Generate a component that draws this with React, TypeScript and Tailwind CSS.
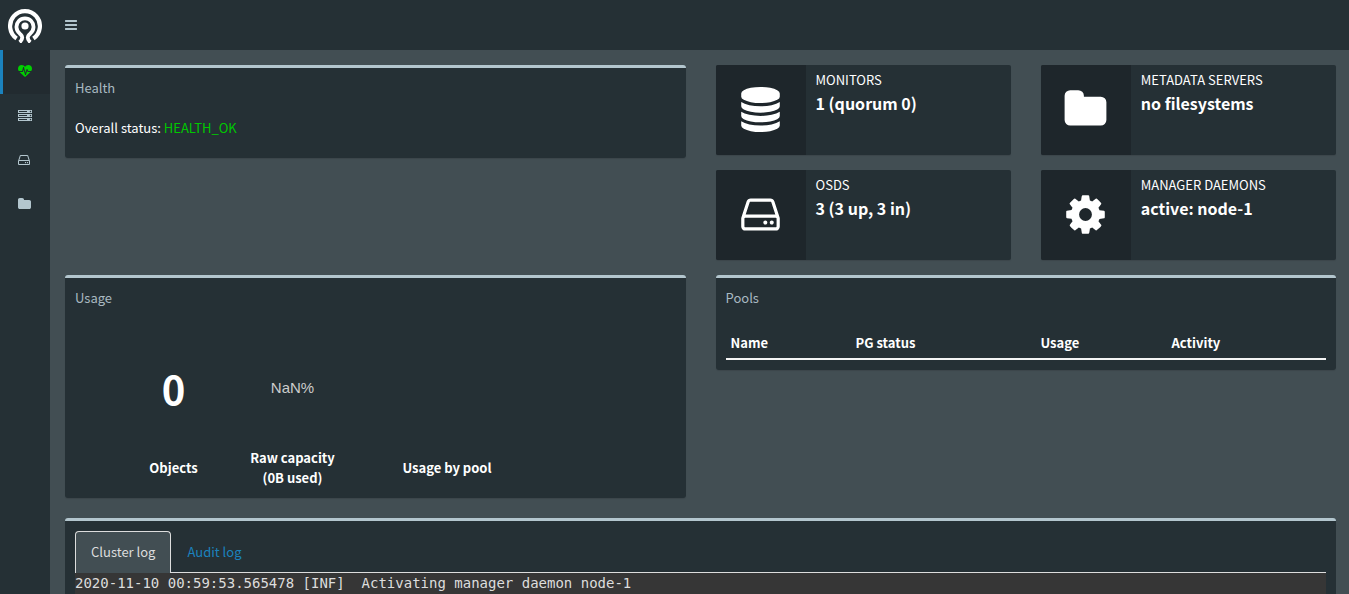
import type { ReactNode } from 'react';

type IconProps = { viewBox: string; path: string; className: string };

const Icon = ({ viewBox, path, className }: IconProps) => (
  <svg viewBox={viewBox} className={className} fill="currentColor" aria-hidden="true">
    <path d={path} />
  </svg>
);

const paths = {
  database:
    'M896 768q237 0 443-43t325-127v170q0 69-103 128t-280 93.5-385 34.5-385-34.5-280-93.5-103-128v-170q119 84 325 127t443 43zm0 768q237 0 443-43t325-127v170q0 69-103 128t-280 93.5-385 34.5-385-34.5-280-93.5-103-128v-170q119 84 325 127t443 43zm0-384q237 0 443-43t325-127v170q0 69-103 128t-280 93.5-385 34.5-385-34.5-280-93.5-103-128v-170q119 84 325 127t443 43zm0-1152q208 0 385 34.5t280 93.5 103 128v128q0 69-103 128t-280 93.5-385 34.5-385-34.5-280-93.5-103-128v-128q0-69 103-128t280-93.5 385-34.5z',
  folder:
    'M1728 608v704q0 92-66 158t-158 66h-1216q-92 0-158-66t-66-158v-960q0-92 66-158t158-66h320q92 0 158 66t66 158v32h672q92 0 158 66t66 158z',
  hdd: 'M1168 1216q0 33-23.5 56.5t-56.5 23.5-56.5-23.5-23.5-56.5 23.5-56.5 56.5-23.5 56.5 23.5 23.5 56.5zm256 0q0 33-23.5 56.5t-56.5 23.5-56.5-23.5-23.5-56.5 23.5-56.5 56.5-23.5 56.5 23.5 23.5 56.5zm112 160v-320q0-13-9.5-22.5t-22.5-9.5h-1216q-13 0-22.5 9.5t-9.5 22.5v320q0 13 9.5 22.5t22.5 9.5h1216q13 0 22.5-9.5t9.5-22.5zm-1230-480h1180l-157-482q-4-13-16-21.5t-26-8.5h-782q-14 0-26 8.5t-16 21.5zm1358 160v320q0 66-47 113t-113 47h-1216q-66 0-113-47t-47-113v-320q0-25 16-75l197-606q17-53 63-86t101-33h782q55 0 101 33t63 86l197 606q16 50 16 75z',
  cog: 'M1152 896q0-106-75-181t-181-75-181 75-75 181 75 181 181 75 181-75 75-181zm512-109v222q0 12-8 23t-20 13l-185 28q-19 54-39 91 35 50 107 138 10 12 10 25t-9 23q-27 37-99 108t-94 71q-12 0-26-9l-138-108q-44 23-91 38-16 136-29 186-7 28-36 28h-222q-14 0-24.5-8.5t-11.5-21.5l-28-184q-49-16-90-37l-141 107q-10 9-25 9-14 0-25-11-126-114-165-168-7-10-7-23 0-12 8-23 15-21 51-66.5t54-70.5q-27-50-41-99l-183-27q-13-2-21-12.5t-8-23.5v-222q0-12 8-23t19-13l186-28q14-46 39-92-40-57-107-138-10-12-10-24 0-10 9-23 26-36 98.5-107.5t94.5-71.5q13 0 26 10l138 107q44-23 91-38 16-136 29-186 7-28 36-28h222q14 0 24.5 8.5t11.5 21.5l28 184q49 16 90 37l142-107q9-9 24-9 13 0 25 10 129 119 165 170 7 8 7 22 0 12-8 23-15 21-51 66.5t-54 70.5q26 50 41 98l183 28q13 2 21 12.5t8 23.5z',
  server:
    'M128 1408h1024v-128h-1024v128zm0-512h1024v-128h-1024v128zm1568 448q0-40-28-68t-68-28-68 28-28 68 28 68 68 28 68-28 28-68zm-1568-960h1024v-128h-1024v128zm1568 448q0-40-28-68t-68-28-68 28-28 68 28 68 68 28 68-28 28-68zm0-512q0-40-28-68t-68-28-68 28-28 68 28 68 68 28 68-28 28-68zm96 832v384h-1792v-384h1792zm0-512v384h-1792v-384h1792zm0-512v384h-1792v-384h1792z',
  heartbeat:
    'M1280 896h305q-5 6-10 10.5t-9 7.5l-3 4-623 600q-18 18-44 18t-44-18l-624-602q-5-2-21-20h369q22 0 39.5-13.5t22.5-34.5l70-281 190 667q6 20 23 33t39 13q21 0 38-13t23-33l146-485 56 112q18 35 57 35zm512-428q0 145-103 300h-369l-111-221q-8-17-25.5-27t-36.5-8q-45 5-56 46l-129 430-196-686q-6-20-23.5-33t-39.5-13-39 13.5-22 34.5l-116 464h-423q-103-155-103-300 0-220 127-344t351-124q62 0 126.5 21.5t120 58 95.5 68.5 76 68q36-36 76-68t95.5-68.5 120-58 126.5-21.5q224 0 351 124t127 344z',
  bars: 'M1664 1344v128q0 26-19 45t-45 19h-1408q-26 0-45-19t-19-45v-128q0-26 19-45t45-19h1408q26 0 45 19t19 45zm0-512v128q0 26-19 45t-45 19h-1408q-26 0-45-19t-19-45v-128q0-26 19-45t45-19h1408q26 0 45 19t19 45zm0-512v128q0 26-19 45t-45 19h-1408q-26 0-45-19t-19-45v-128q0-26 19-45t45-19h1408q26 0 45 19t19 45z',
};

const navItems = [
  { label: 'Cluster health', path: paths.heartbeat, viewBox: '0 0 1792 1792', size: 'w-[14px]', active: true },
  { label: 'Servers', path: paths.server, viewBox: '0 0 1792 1792', size: 'w-[14px]', active: false },
  { label: 'OSDs', path: paths.hdd, viewBox: '128 0 1536 1792', size: 'w-[12px]', active: false },
  { label: 'Filesystems', path: paths.folder, viewBox: '64 0 1664 1792', size: 'w-[13px]', active: false },
];

const stats = [
  { label: 'MONITORS', value: '1 (quorum 0)', path: paths.database },
  { label: 'METADATA SERVERS', value: 'no filesystems', path: paths.folder },
  { label: 'OSDS', value: '3 (3 up, 3 in)', path: paths.hdd },
  { label: 'MANAGER DAEMONS', value: 'active: node-1', path: paths.cog },
];

const Logo = () => (
  <svg viewBox="0 0 34 34" className="size-[34px]" fill="none" stroke="#fff" aria-hidden="true">
    <circle cx="17" cy="17" r="3.6" fill="#fff" stroke="none" />
    <path d="M8.600 29.400A14.900 14.900 0 1 1 25.400 29.400" strokeWidth="4.200" />
    <path d="M11.600 33.200q2.800-2 2.600-5c0-1.600-1.400-2.400-2.600-3.800a8.500 8.500 0 1 1 10.800 0c-1.200 1.400-2.600 2.200-2.600 3.800q-.2 3 2.600 5" strokeWidth="3.800" />
  </svg>
);

const Box = ({ title, children }: { title: string; children: ReactNode }) => (
  <section className="rounded-[3px] border-t-[3px] border-[#b3c6ce] bg-[#253035] shadow-[0_1px_1px_rgba(0,0,0,0.1)]">
    <h3 className="p-[10px] leading-5 text-[#a9b9c1]">{title}</h3>
    <div className="p-[10px]">{children}</div>
  </section>
);

const App = () => {
  return (
    <div className="flex min-h-screen flex-col bg-[#424e53] font-['Noto_Sans_CJK_JP','Noto_Sans_CJK_SC',sans-serif] text-[13px] leading-5 text-white">
      <header className="flex h-[50px] items-center bg-[#253035]">
        <a href="#" aria-label="Home" className="flex w-[50px] justify-center pt-[2px]">
          <Logo />
        </a>
        <button type="button" aria-label="Toggle navigation" className="px-[15px] text-[#b3c6ce]">
          <Icon viewBox="128 0 1536 1792" path={paths.bars} className="h-[14px] w-[12px]" />
        </button>
      </header>

      <div className="flex flex-1">
        <nav className="w-[50px] shrink-0 bg-[#253035]">
          {navItems.map((item) => (
            <a
              key={item.label}
              href="#"
              aria-label={item.label}
              className={
                item.active
                  ? 'flex h-11 items-center border-l-[3px] border-[#1b82bd] bg-[#222b30] pl-[15px] text-[#00d000]'
                  : 'flex h-11 items-center border-l-[3px] border-transparent pl-[15px] text-[#b3c6ce]'
              }
            >
              <Icon viewBox={item.viewBox} path={item.path} className={`h-[14px] ${item.size}`} />
            </a>
          ))}
        </nav>

        <main className="flex min-w-0 flex-1 flex-col pt-[15px] pr-[13px] pl-[15px]">
          <div className="grid grid-cols-2 items-start gap-x-[30px] gap-y-[15px]">
            <Box title="Health">
              <p className="pb-[10px]">
                Overall status: <span className="text-[#00c800]">HEALTH_OK</span>
              </p>
            </Box>

            <div className="grid grid-cols-2 gap-x-[30px] gap-y-[15px]">
              {stats.map((stat) => (
                <div
                  key={stat.label}
                  className="flex h-[90px] overflow-hidden rounded-[2px] bg-[#253035] shadow-[0_1px_1px_rgba(0,0,0,0.1)]"
                >
                  <div className="flex w-[90px] shrink-0 justify-center bg-[#1e262b] pt-[22px]">
                    <Icon viewBox="0 0 1792 1792" path={stat.path} className="size-[45px]" />
                  </div>
                  <div className="px-[10px] py-[5px]">
                    <div>{stat.label}</div>
                    <div className="text-[16px] leading-[26px] font-bold">{stat.value}</div>
                  </div>
                </div>
              ))}
            </div>

            <Box title="Usage">
              <table className="ml-[39px] text-center font-bold">
                <tbody>
                  <tr className="h-[120px]">
                    <td className="w-[119px] text-[40px]">0</td>
                    <td className="w-[119px] font-['Liberation_Sans',sans-serif] text-[15px] font-normal text-[#ccc]">
                      NaN%
                    </td>
                    <td className="w-[190px]"></td>
                  </tr>
                  <tr>
                    <td>Objects</td>
                    <td>
                      Raw capacity
                      <br />
                      (0B used)
                    </td>
                    <td>Usage by pool</td>
                  </tr>
                </tbody>
              </table>
            </Box>

            <Box title="Pools">
              <table className="w-full table-fixed text-left">
                <thead>
                  <tr className="border-b-2 border-[#f4f4f4]">
                    <th className="w-[125px] p-[5px]">Name</th>
                    <th className="w-[185px] p-[5px]">PG status</th>
                    <th className="w-[131px] p-[5px]">Usage</th>
                    <th className="p-[5px]">Activity</th>
                  </tr>
                </thead>
              </table>
            </Box>
          </div>

          <section className="mt-5 flex flex-1 flex-col rounded-t-[3px] border-t-[3px] border-[#b3c6ce] bg-[#253035] px-[10px] pt-[10px]">
            <div role="tablist" className="flex border-b border-[#ddd]">
              <button
                type="button"
                role="tab"
                aria-selected="true"
                className="-mb-px rounded-t-[4px] border border-b-0 border-[#ddd] bg-[#424e53] px-[15px] pt-[10px] pb-[11px] text-[#ddd]"
              >
                Cluster log
              </button>
              <button type="button" role="tab" aria-selected="false" className="px-4 pt-[11px] pb-[10px] text-[#1b82bd]">
                Audit log
              </button>
            </div>
            <div
              role="tabpanel"
              className="flex-1 bg-[#363636] font-['DejaVu_Sans_Mono',monospace] text-[14px] whitespace-pre text-[#ddd]"
            >
              2020-11-10 00:59:53.565478 [INF]{'  '}Activating manager daemon node-1
            </div>
          </section>
        </main>
      </div>
    </div>
  );
};

export default App;
